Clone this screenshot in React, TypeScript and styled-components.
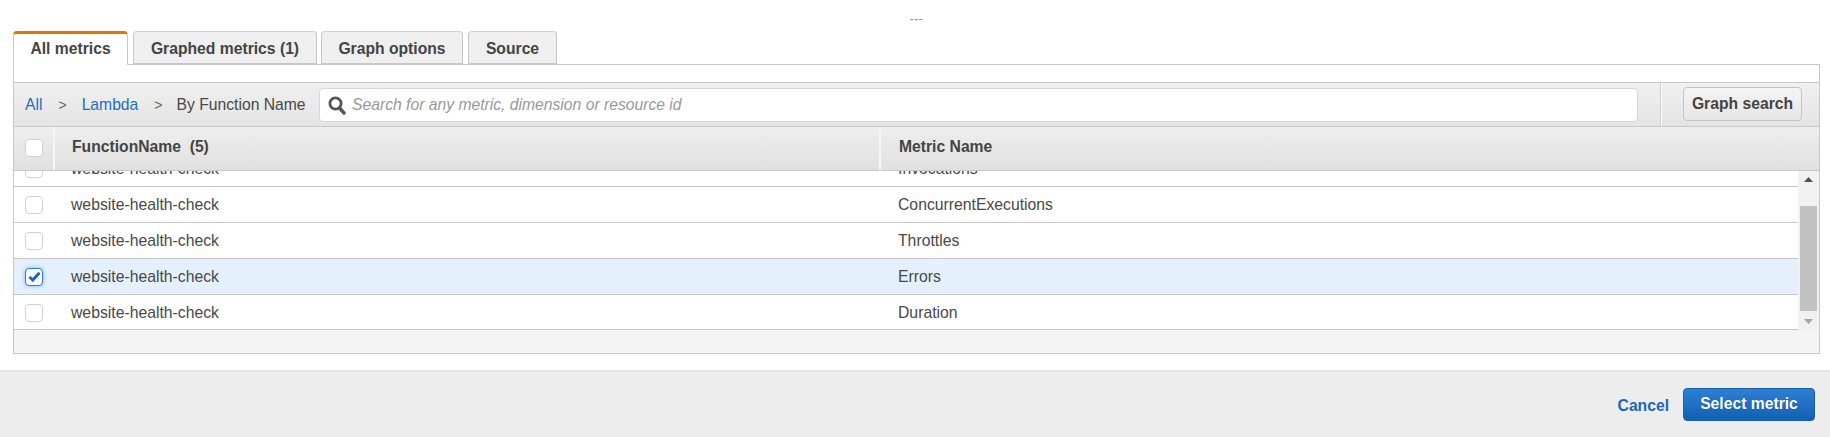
import React from "react";
import styled, { createGlobalStyle } from "styled-components";

const Global = createGlobalStyle`
  html, body { margin: 0; padding: 0; background: #fff; }
  body { font-family: "Liberation Sans", Arial, sans-serif; color: #444; }
`;

const Page = styled.div`
  width: 1830px;
  height: 437px;
  display: flex;
  flex-direction: column;
  overflow: hidden;
`;
const Main = styled.div`
  flex: 1;
  padding: 0 10px 0 13px;
  display: flex;
  flex-direction: column;
`;
const Dots = styled.div`
  height: 31px;
  text-align: center;
  font-size: 12px;
  line-height: 38px;
  color: #888;
  letter-spacing: 0.5px;
`;
const TabBar = styled.div`
  display: flex;
  height: 33px;
  position: relative;
  z-index: 1;
`;
const Tab = styled.div<{ $active?: boolean; $w: number; $gap: number }>`
  box-sizing: border-box;
  width: ${(p) => p.$w}px;
  margin-right: ${(p) => p.$gap}px;
  height: ${(p) => (p.$active ? 34 : 33)}px;
  border: 1px solid #c8c8c8;
  border-top: ${(p) => (p.$active ? "3px solid #e07700" : "1px solid #d2d2d2")};
  border-bottom: ${(p) => (p.$active ? "none" : "1px solid #c8c8c8")};
  border-radius: 4px 4px 0 0;
  background: ${(p) => (p.$active ? "#fff" : "#efefef")};
  display: flex;
  justify-content: center;
  padding-top: ${(p) => (p.$active ? 4 : 6)}px;
  font-size: 15.7px;
  font-weight: bold;
  color: #444;
  line-height: 22px;
`;
const Panel = styled.div`
  box-sizing: border-box;
  width: 1807px;
  height: 290px;
  border: 1px solid #c8c8c8;
  display: flex;
  flex-direction: column;
`;
const Spacer = styled.div`
  height: 17px;
  background: #fff;
`;
const Toolbar = styled.div`
  box-sizing: border-box;
  height: 45px;
  border-top: 1px solid #c8c8c8;
  border-bottom: 1px solid #c8c8c8;
  background: linear-gradient(#f0f0f0, #e4e4e4);
  display: flex;
  align-items: stretch;
  font-size: 15.7px;
`;
const Crumbs = styled.div`
  box-sizing: border-box;
  display: flex;
  align-items: center;
  padding-left: 11px;
  width: 305px;
  flex-shrink: 0;
`;
const CrumbLink = styled.span`
  color: #1a6ec2;
`;
const CrumbSep = styled.span`
  color: #666;
  margin: 0 15px 0 16px;
  font-size: 14px;
  line-height: 1;
`;
const CrumbText = styled.span`
  color: #484848;
  white-space: nowrap;
  margin-left: -1px;
`;
const SearchBox = styled.div`
  box-sizing: border-box;
  width: 1319px;
  height: 34px;
  margin-top: 5px;
  background: #fff;
  border: 1px solid #d6d6d6;
  border-radius: 4px;
  display: flex;
  align-items: center;
  padding-left: 8px;
  gap: 6px;
  font-style: italic;
  color: #999;
`;
const SearchDivider = styled.div`
  width: 1px;
  margin-left: 22px;
  background: #fafafa;
  border-left: 1px solid #d0d0d0;
`;
const GraphSearch = styled.div`
  box-sizing: border-box;
  width: 119px;
  height: 34px;
  margin: 4px 0 0 21px;
  border: 1px solid #c4c4c4;
  border-radius: 4px;
  background: linear-gradient(#f4f4f4, #e6e6e6);
  font-weight: bold;
  color: #444;
  text-align: center;
  line-height: 31px;
`;
const HeaderRow = styled.div`
  box-sizing: border-box;
  height: 44px;
  display: flex;
  border-bottom: 1px solid #c8c8c8;
  background: linear-gradient(#eeeeee, #e0e0e0);
  font-size: 15.7px;
  font-weight: bold;
  color: #444;
`;
const HeadCheckCell = styled.div`
  box-sizing: border-box;
  width: 41px;
  border-right: 2px solid #f6f6f6;
  display: flex;
  align-items: center;
  padding: 0 0 2px 11px;
`;
const HeadNameCell = styled.div`
  box-sizing: border-box;
  width: 826px;
  border-right: 2px solid #f6f6f6;
  padding-left: 17px;
  line-height: 40px;
  white-space: pre;
`;
const HeadMetricCell = styled.div`
  padding-left: 18px;
  line-height: 40px;
`;
const Body = styled.div`
  height: 159px;
  display: flex;
`;
const Viewport = styled.div`
  flex: 1;
  overflow: hidden;
`;
const RowList = styled.div`
  margin-top: -20px;
`;
const Row = styled.div<{ $selected?: boolean }>`
  box-sizing: border-box;
  height: 36px;
  display: flex;
  align-items: center;
  border-bottom: 1px solid #c8c8c8;
  background: ${(p) => (p.$selected ? "#e4f1fd" : "#fff")};
  font-size: 15.75px;
  color: #484848;
  &:last-child {
    height: 35px;
    padding-top: 1px;
  }
`;
const CheckCell = styled.div`
  width: 41px;
  padding-left: 11px;
  box-sizing: border-box;
  display: flex;
`;
const NameCell = styled.div`
  width: 826px;
  padding-left: 16px;
  box-sizing: border-box;
`;
const MetricCell = styled.div`
  padding-left: 17px;
`;
const Check = styled.div<{ $on?: boolean }>`
  box-sizing: border-box;
  width: 18px;
  height: 18px;
  border-radius: 4px;
  background: #fff;
  border: 1px solid ${(p) => (p.$on ? "#2b7fd8" : "#d2d2d2")};
  box-shadow: ${(p) => (p.$on ? "0 0 4px #7db8ef" : "none")};
  display: flex;
  align-items: center;
  justify-content: center;
`;
const Scrollbar = styled.div`
  width: 21px;
  background: #f1f1f1;
  display: flex;
  flex-direction: column;
  align-items: center;
`;
const ArrowBox = styled.div`
  height: 17px;
  width: 100%;
  display: flex;
  align-items: center;
  justify-content: center;
`;
const ThumbTrack = styled.div`
  flex: 1;
  width: 17px;
  padding-top: 18px;
  box-sizing: border-box;
`;
const Thumb = styled.div`
  height: 105px;
  background: #c1c1c1;
`;
const PanelFoot = styled.div`
  flex: 1;
  background: #f4f4f4;
`;
const Footer = styled.div`
  box-sizing: border-box;
  height: 67px;
  border-top: 2px solid #e3e3e3;
  background: #ededed;
  display: flex;
  justify-content: flex-end;
  align-items: flex-start;
  padding: 16px 15px 0 0;
  font-size: 15.7px;
  font-weight: bold;
`;
const Cancel = styled.span`
  color: #1a66b8;
  line-height: 35px;
  margin-right: 14px;
`;
const Primary = styled.div`
  box-sizing: border-box;
  width: 132px;
  height: 33px;
  border: 1px solid #1561ab;
  border-radius: 4px;
  background: linear-gradient(#2d7fd6, #1260b0);
  color: #fff;
  text-align: center;
  line-height: 29px;
  text-shadow: 0 0 1px #0b4a8c;
`;

const rows = [
  { metric: "Invocations" },
  { metric: "ConcurrentExecutions" },
  { metric: "Throttles" },
  { metric: "Errors", selected: true },
  { metric: "Duration" },
];

const tabs = [
  { label: "All metrics", w: 115, gap: 5, active: true },
  { label: "Graphed metrics (1)", w: 184, gap: 4 },
  { label: "Graph options", w: 142, gap: 5 },
  { label: "Source", w: 89, gap: 0 },
];

export default function App() {
  return (
    <Page>
      <Global />
      <Main>
        <Dots>---</Dots>
        <TabBar>
          {tabs.map((t) => (
            <Tab key={t.label} $active={t.active} $w={t.w} $gap={t.gap}>
              {t.label}
            </Tab>
          ))}
        </TabBar>
        <Panel>
          <Spacer />
          <Toolbar>
            <Crumbs>
              <CrumbLink>All</CrumbLink>
              <CrumbSep>&gt;</CrumbSep>
              <CrumbLink>Lambda</CrumbLink>
              <CrumbSep>&gt;</CrumbSep>
              <CrumbText>By Function Name</CrumbText>
            </Crumbs>
            <SearchBox>
              <svg width="18" height="20" viewBox="0 0 18 20">
                <circle cx="7.5" cy="8.5" r="5.6" fill="none" stroke="#555" strokeWidth="2.8" />
                <path d="M11.5 13 L16 18" stroke="#555" strokeWidth="3.4" strokeLinecap="round" />
              </svg>
              Search for any metric, dimension or resource id
            </SearchBox>
            <SearchDivider />
            <GraphSearch>Graph search</GraphSearch>
          </Toolbar>
          <HeaderRow>
            <HeadCheckCell>
              <Check />
            </HeadCheckCell>
            <HeadNameCell>FunctionName  (5)</HeadNameCell>
            <HeadMetricCell>Metric Name</HeadMetricCell>
          </HeaderRow>
          <Body>
            <Viewport>
              <RowList>
                {rows.map((r) => (
                  <Row key={r.metric} $selected={r.selected}>
                    <CheckCell>
                      <Check $on={r.selected}>
                        {r.selected && (
                          <svg width="13" height="11" viewBox="0 0 13 11">
                            <path d="M1.5 6 L4.8 9 L11.5 1.8" fill="none" stroke="#1a66b8" strokeWidth="3" />
                          </svg>
                        )}
                      </Check>
                    </CheckCell>
                    <NameCell>website-health-check</NameCell>
                    <MetricCell>{r.metric}</MetricCell>
                  </Row>
                ))}
              </RowList>
            </Viewport>
            <Scrollbar>
              <ArrowBox>
                <svg width="9" height="5" viewBox="0 0 9 5">
                  <path d="M4.5 0 L9 5 L0 5 Z" fill="#505050" />
                </svg>
              </ArrowBox>
              <ThumbTrack>
                <Thumb />
              </ThumbTrack>
              <ArrowBox>
                <svg width="9" height="5" viewBox="0 0 9 5">
                  <path d="M0 0 L9 0 L4.5 5 Z" fill="#a3a3a3" />
                </svg>
              </ArrowBox>
            </Scrollbar>
          </Body>
          <PanelFoot />
        </Panel>
      </Main>
      <Footer>
        <Cancel>Cancel</Cancel>
        <Primary>Select metric</Primary>
      </Footer>
    </Page>
  );
}
